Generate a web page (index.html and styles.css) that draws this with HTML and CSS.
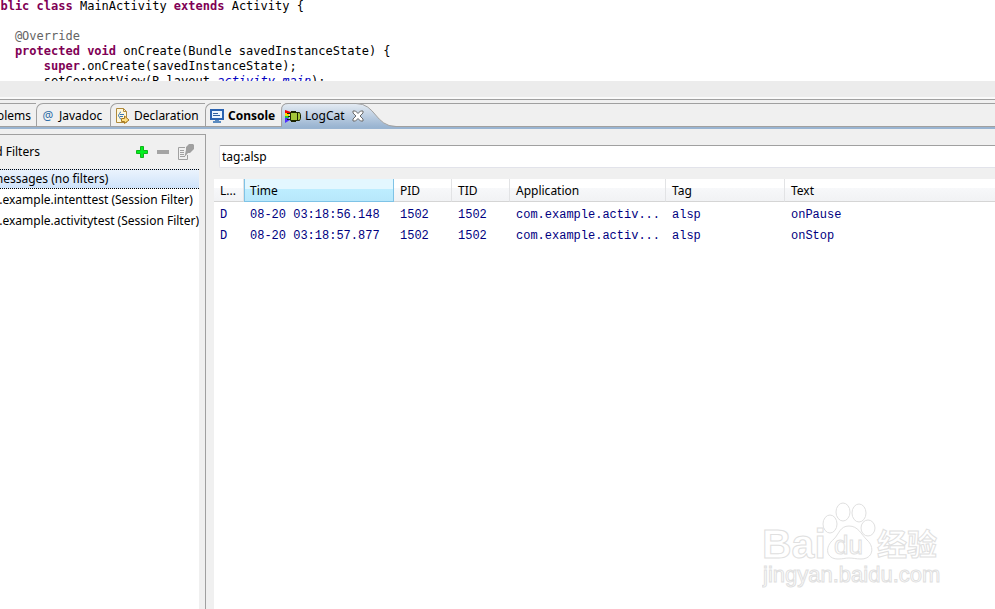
FILE: index.html
```html
<!DOCTYPE html>
<html lang="en">
<head>
    <meta charset="UTF-8">
    <meta name="viewport" content="width=device-width, initial-scale=1.0">
    <title>LogCat</title>
    <link rel="stylesheet" href="styles.css">
</head>
<body>

<div class="editor">
    <div><b>public class</b> MainActivity <b>extends</b> Activity {</div>
    <div>&nbsp;</div>
    <div class="indent1 annotation">@Override</div>
    <div class="indent1"><b>protected void</b> onCreate(Bundle savedInstanceState) {</div>
    <div class="indent2"><b>super</b>.onCreate(savedInstanceState);</div>
    <div class="indent2">setContentView(R.layout.<i>activity_main</i>);</div>
</div>
<div class="scrollbar"></div>

<div class="tabs">
    <button class="tab tab-problems">Problems</button>
    <button class="tab tab-javadoc">
        <span class="at">@</span>
        Javadoc
    </button>
    <button class="tab tab-declaration">
        <svg width="15" height="16" viewBox="0 0 15 16">
            <path d="M1.5.5h7l3 3v11h-10z" fill="#fff8dc" stroke="#b08a3c"/>
            <path d="M8.5.5v3h3" fill="none" stroke="#b08a3c"/>
            <path d="M6 4c-2 0-1 3-3 3.500C5 8 4 11 6 11M5 6.500h4M5 8.500h3" fill="none" stroke="#3d78b4"/>
            <path d="M6.500 10.500h3V8l4.500 4-4.500 3.500v-2h-3z" fill="#ffdf80" stroke="#a8781e"/>
        </svg>
        Declaration
    </button>
    <button class="tab tab-console">
        <svg width="14" height="14" viewBox="0 0 14 14">
            <path d="M1 1h12v9H1z" fill="#eaf4ff" stroke="#2a62b0" stroke-width="2"/>
            <path d="M3 4.500h5M3 6.500h7" stroke="#2f5f9f"/>
            <path d="M5 11h4v1h2v2H3v-2h2z" fill="#5b8bc0"/>
        </svg>
        Console
    </button>
    <div class="tab-active">
        <svg class="tab-shape" width="116" height="24" viewBox="0 0 116 24">
            <defs>
                <linearGradient id="tabFill" x1="0" y1="0" x2="0" y2="1">
                    <stop offset="0" stop-color="#e4ebf3"/>
                    <stop offset="1" stop-color="#99b4d1"/>
                </linearGradient>
            </defs>
            <path d="M.5 24V7Q.5.5 7 .5H75C95 .5 94 23.500 115 23.500V24z" fill="url(#tabFill)"/>
            <path d="M.5 24V7Q.5.5 7 .5H75C95 .5 94 23.500 115 23.500" fill="none" stroke="#a0a0a0"/>
        </svg>
        <button class="tab-title">
            <svg width="17" height="13" viewBox="0 0 17 13">
                <path d="M0 0l6 2v2H0z" fill="#f00000"/>
                <path d="M0 3h4v3H0z" fill="#ffd800"/>
                <path d="M0 6h4v2H0z" fill="#20c840"/>
                <path d="M0 8h3l2 2-5 3z" fill="#5030ff"/>
                <path d="M5.5 2.500h9l1 2v4l-1 2h-9z" fill="#a4c639" stroke="#1c2400"/>
                <path d="M2 3.500h4M3 6.500h3M2 9.500h4M12.500 3v7M6 1.500h5M6 11.500h5" stroke="#1c2400"/>
            </svg>
            LogCat
        </button>
        <button class="close" aria-label="Close">
            <svg width="12" height="12" viewBox="0 0 12 12">
                <path d="M1 1h2.500L6 3.500 8.500 1H11v2L8 6l3 3v2H8.500L6 8.500 3.500 11H1V9l3-3-3-3z" fill="#fff" stroke="#6a6a6a"/>
            </svg>
        </button>
    </div>
</div>

<div class="view">
    <div class="sidebar">
        <div class="filters-head">
            <span class="filters-title">Saved Filters</span>
            <button aria-label="Add filter">
                <svg width="12" height="12" viewBox="0 0 12 12"><path d="M4.500.5h3v4h4v3h-4v4h-3v-4h-4v-3h4z" fill="#00f020" stroke="#10b418"/></svg>
            </button>
            <button aria-label="Delete filter">
                <svg width="12" height="12" viewBox="0 0 12 12"><path d="M0 4h12v4H0z" fill="#a4a4a4"/></svg>
            </button>
            <button aria-label="Edit filter">
                <svg width="16" height="16" viewBox="0 0 16 16">
                    <path d="M7 3.500H.5v12h9V11" fill="none" stroke="#a0a0a0"/>
                    <path d="M2 6.500h4M2 8.500h4M2 10.500h4M2 12.500h5" stroke="#a0a0a0"/>
                    <path d="M6.500 13l1-5L8 6V3l3-3h4l1 1v4l-4 4h-2z" fill="#a0a0a0"/>
                </svg>
            </button>
        </div>
        <ul class="filters">
            <li class="selected">All messages (no filters)</li>
            <li>com.example.intenttest (Session Filter)</li>
            <li>com.example.activitytest (Session Filter)</li>
        </ul>
    </div>

    <div class="log">
        <input class="search" type="text" value="tag:alsp" aria-label="Search for messages">
        <div class="log-body">
            <table>
                <colgroup>
                    <col class="c-level"><col class="c-time"><col class="c-id"><col class="c-id"><col class="c-app"><col class="c-tag"><col>
                </colgroup>
                <thead>
                    <tr><th>L...</th><th class="sorted">Time</th><th>PID</th><th>TID</th><th>Application</th><th>Tag</th><th>Text</th></tr>
                </thead>
                <tbody>
                    <tr><td>D</td><td>08-20 03:18:56.148</td><td>1502</td><td>1502</td><td>com.example.activ...</td><td>alsp</td><td>onPause</td></tr>
                    <tr><td>D</td><td>08-20 03:18:57.877</td><td>1502</td><td>1502</td><td>com.example.activ...</td><td>alsp</td><td>onStop</td></tr>
                </tbody>
            </table>
        </div>
    </div>
</div>

<svg class="watermark" width="180" height="90" viewBox="0 0 180 90">
    <g fill="#fff" stroke="#e0e0e0">
        <ellipse cx="68" cy="22" rx="7" ry="9"/>
        <ellipse cx="81" cy="10" rx="7" ry="9"/>
        <ellipse cx="97" cy="11" rx="7" ry="9"/>
        <ellipse cx="106" cy="26" rx="7" ry="8"/>
        <path d="M87 24c-9 0-10 8-15 13-10 8-8 20 4 20 5 0 7-1 11-1s7 1 12 1c12 0 14-12 6-19-6-6-9-14-18-14z"/>
        <text class="wm-bai" x="0" y="56">Bai</text>
        <text class="wm-du" x="72" y="52">du</text>
        <text class="wm-cn" x="115" y="53">经验</text>
        <text class="wm-url" x="1" y="80">jingyan.baidu.com</text>
    </g>
</svg>

</body>
</html>
```
FILE: styles.css
```css
body {
    margin: 0;
    min-height: 100vh;
    display: flex;
    flex-direction: column;
    overflow: hidden;
    background: #f0f0f0;
    color: #000;
    font: 12px/20px "Noto Sans", "Open Sans", sans-serif;
}
button {
    padding: 0;
    border: 0;
    background: none;
    color: inherit;
    font: inherit;
    display: flex;
    align-items: center;
}
svg {
    display: block;
    flex: none;
}

/* editor, scrolled a little to the right and down */
.editor {
    height: 82px;
    margin: -1px 0 0 -14px;
    overflow: hidden;
    background: #fff;
    font: 12px/15px "DejaVu Sans Mono", monospace;
    white-space: nowrap;
}
.editor b {
    color: #7f0055;
}
.editor i {
    color: #0000c0;
}
.indent1 {
    padding-left: 4ch;
}
.indent2 {
    padding-left: 8ch;
}
.annotation {
    color: #646464;
}
.scrollbar {
    height: 16px;
    background: #ececec;
    border-bottom: 2px solid #fafafa;
}

/* view tabs */
.tabs {
    display: flex;
    height: 23px;
    padding-top: 3px;
    border-top: 1px solid #a0a0a0;
    border-bottom: 1px solid #a0a0a0;
}
.tab {
    box-sizing: border-box;
    height: 23px;
    gap: 4px;
    padding: 2px 0 0 4px;
    border-top: 1px solid #a0a0a0;
    border-left: 1px solid #a0a0a0;
    border-top-left-radius: 7px;
    white-space: nowrap;
}
.tab-problems {
    width: 36px;
    padding: 2px 5px 0 0;
    border-left: 0;
    border-radius: 0;
    justify-content: flex-end;
    overflow: hidden;
}
.tab-javadoc {
    width: 74px;
}
.at {
    width: 14px;
    color: #2f6fa8;
}
.tab-declaration {
    width: 95px;
}
.tab-console {
    width: 76px;
    font-weight: bold;
}
.tab-active {
    position: relative;
    flex: 1;
    display: flex;
    gap: 7px;
    height: 23px;
    box-sizing: border-box;
    padding: 2px 0 0 4px;
    border-top: 1px solid #a0a0a0;
    border-top-left-radius: 7px;
}
.tab-shape {
    position: absolute;
    left: 0;
    top: -1px;
}
.tab-title, .close {
    position: relative;
    gap: 3px;
}

/* logcat view */
.view {
    flex: 1;
    display: flex;
    border-top: 2px solid #99b4d1;
}
.sidebar {
    box-sizing: border-box;
    width: 206px;
    flex: none;
    display: flex;
    flex-direction: column;
    margin-top: 5px;
    padding-right: 6px;
    border-top: 1px solid #a0a0a0;
    border-right: 1px solid #a0a0a0;
}
.filters-head {
    display: flex;
    align-items: center;
    gap: 9px;
    height: 34px;
    padding-right: 5px;
}
.filters-title {
    flex: 1;
    margin-left: -31px;
}
.filters {
    flex: 1;
    margin: 0;
    padding: 0;
    list-style: none;
    overflow: hidden;
    background: #fff;
    line-height: 21px;
    white-space: nowrap;
}
.filters li {
    text-indent: -25px;
}
.filters .selected {
    line-height: 18px;
    border-top: 1px dotted #000;
    border-bottom: 1px dotted #000;
    background: linear-gradient(#eaf3fd, #cfe3fa);
}
.log {
    flex: 1;
    min-width: 0;
    display: flex;
    flex-direction: column;
    padding-left: 8px;
}
.search {
    box-sizing: border-box;
    height: 23px;
    margin: 16px 0 11px 5px;
    padding: 0 2px;
    border: 1px solid #e2e3ea;
    border-top-color: #a0a0a0;
    border-right: 0;
    border-radius: 2px 0 0 2px;
    font: inherit;
}
.log-body {
    flex: 1;
    background: #fff;
}
table {
    width: 100%;
    table-layout: fixed;
    border-collapse: separate;
    border-spacing: 0;
}
.c-level {
    width: 30px;
}
.c-time {
    width: 150px;
}
.c-id {
    width: 58px;
}
.c-app {
    width: 156px;
}
.c-tag {
    width: 119px;
}
th {
    height: 23px;
    box-sizing: border-box;
    padding: 2px 6px 0;
    border-right: 1px solid #e2e3e5;
    border-bottom: 1px solid #d5d5d5;
    background: linear-gradient(#fff 40%, #f7f8fa 41%, #f1f2f4);
    font-weight: normal;
    text-align: left;
}
th:last-child {
    border-right: 0;
}
.sorted {
    padding-left: 5px;
    border: 1px solid #7fc3e6;
    border-top: 0;
    background: linear-gradient(#e3f7ff 45%, #bdedff 46%, #b7e7fb);
}
tbody tr:first-child td {
    padding-top: 3px;
}
td {
    padding: 0 0 0 6px;
    color: #00007f;
    font: 12px/21px "Liberation Mono", monospace;
    white-space: nowrap;
}

.watermark {
    position: absolute;
    right: 53px;
    bottom: 17px;
}
.wm-bai {
    font: bold 41px "Liberation Sans", sans-serif;
}
.wm-du {
    font: 26px "Liberation Sans", sans-serif;
}
.wm-cn {
    font: bold 30px "Noto Sans CJK SC", sans-serif;
}
.wm-url {
    font: 22px "Liberation Sans", sans-serif;
}
```
